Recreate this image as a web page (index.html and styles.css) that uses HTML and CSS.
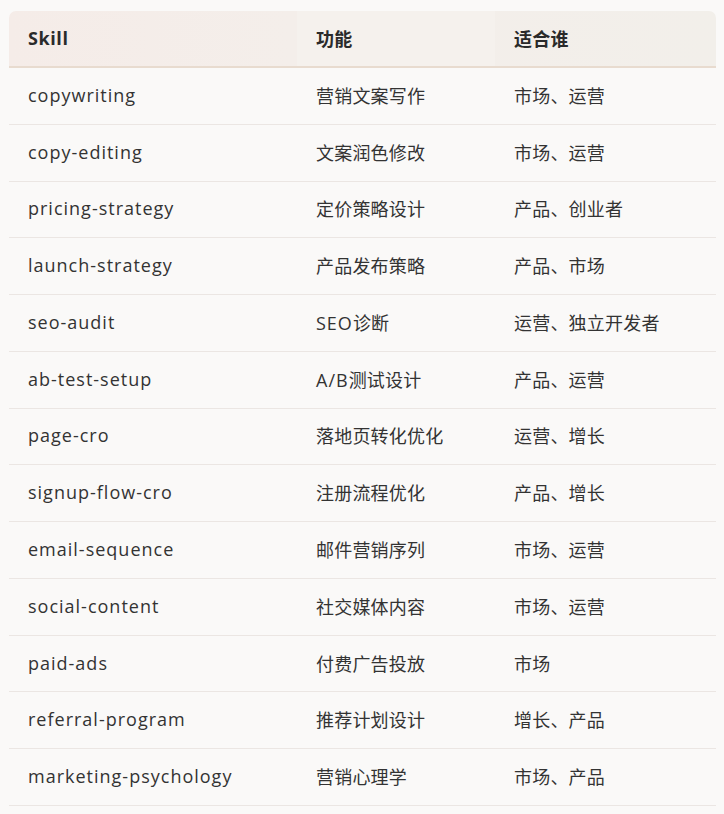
FILE: index.html
```html
<!DOCTYPE html>
<html lang="zh">
<head>
<meta charset="utf-8">
<link rel="stylesheet" href="styles.css">
</head>
<body>
<div class="table">
  <div class="row head">
    <div class="c c1">Skill</div><div class="c c2">功能</div><div class="c c3">适合谁</div>
  </div>
  <div class="row"><div class="c c1">copywriting</div><div class="c c2">营销文案写作</div><div class="c c3">市场、运营</div></div>
  <div class="row"><div class="c c1">copy-editing</div><div class="c c2">文案润色修改</div><div class="c c3">市场、运营</div></div>
  <div class="row"><div class="c c1">pricing-strategy</div><div class="c c2">定价策略设计</div><div class="c c3">产品、创业者</div></div>
  <div class="row"><div class="c c1">launch-strategy</div><div class="c c2">产品发布策略</div><div class="c c3">产品、市场</div></div>
  <div class="row"><div class="c c1">seo-audit</div><div class="c c2"><span class="lat">SEO</span>诊断</div><div class="c c3">运营、独立开发者</div></div>
  <div class="row"><div class="c c1">ab-test-setup</div><div class="c c2"><span class="lat">A/B</span>测试设计</div><div class="c c3">产品、运营</div></div>
  <div class="row"><div class="c c1">page-cro</div><div class="c c2">落地页转化优化</div><div class="c c3">运营、增长</div></div>
  <div class="row"><div class="c c1">signup-flow-cro</div><div class="c c2">注册流程优化</div><div class="c c3">产品、增长</div></div>
  <div class="row"><div class="c c1">email-sequence</div><div class="c c2">邮件营销序列</div><div class="c c3">市场、运营</div></div>
  <div class="row"><div class="c c1">social-content</div><div class="c c2">社交媒体内容</div><div class="c c3">市场、运营</div></div>
  <div class="row"><div class="c c1">paid-ads</div><div class="c c2">付费广告投放</div><div class="c c3">市场</div></div>
  <div class="row"><div class="c c1">referral-program</div><div class="c c2">推荐计划设计</div><div class="c c3">增长、产品</div></div>
  <div class="row"><div class="c c1">marketing-psychology</div><div class="c c2">营销心理学</div><div class="c c3">市场、产品</div></div>
</div>
</body>
</html>
```
FILE: styles.css
```css
html, body {
  margin: 0;
  padding: 0;
  background: #faf9f8;
}
body {
  padding: 11px 8px 0 9px;
  font-family: "Open Sans", "Noto Sans CJK SC", sans-serif;
  font-size: 18px;
  color: #333333;
}
.table {
  width: 707px;
}
.row {
  display: grid;
  grid-template-columns: 288px 198px 1fr;
  height: 56.77px;
  box-sizing: border-box;
  border-bottom: 1px solid #ebe6e3;
  align-items: center;
}
.row.head {
  height: 57px;
  border-bottom: 2px solid #e8dbcf;
  border-radius: 7px 7px 0 0;
  background: linear-gradient(90deg, #f5ece8 0%, #f4eeea 40%, #f2efea 100%);
  font-weight: 700;
  color: #2a2a2a;
}
.row.head .c {
  height: 100%;
  display: flex;
  align-items: center;
  box-sizing: border-box;
}
.row.head .c2 {
  background: #f5f1ed;
}
.c {
  padding-left: 19px;
  padding-bottom: 2px;
  white-space: nowrap;
  letter-spacing: 0.2px;
}
.c1, .lat {
  letter-spacing: 1px;
}
.row.head .c1 {
  letter-spacing: 0.6px;
}
```
